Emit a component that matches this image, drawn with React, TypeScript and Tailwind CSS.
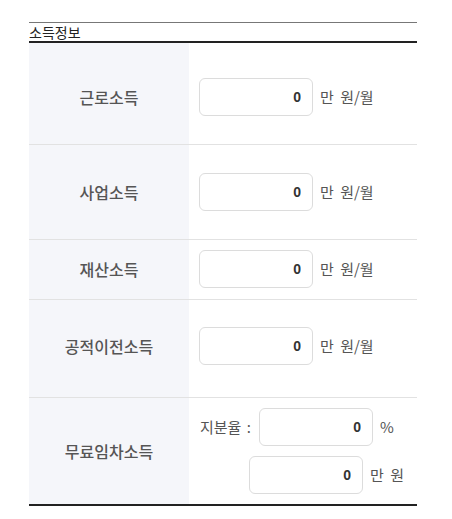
const FONT = { fontFamily: '"Noto Sans CJK KR", "Noto Sans", sans-serif' };

function NumInput({ className = "" }: { className?: string }) {
  return (
    <input
      type="text"
      defaultValue="0"
      readOnly
      className={`h-[38px] w-[114px] rounded-[6px] border border-[#dcdcdc] bg-white pr-[11px] text-right text-[14px] font-bold text-[#333] outline-none ${className}`}
      style={{ fontFamily: '"Liberation Sans", Arial, sans-serif' }}
    />
  );
}

function Unit({ children }: { children: React.ReactNode }) {
  return <span className="ml-[7px] text-[15px] text-[#555] [word-spacing:3px]">{children}</span>;
}

type Row = { label: string; pt: string; pb: string };

const ROWS: Row[] = [
  { label: "근로소득", pt: "pt-[35px]", pb: "pb-[28px]" },
  { label: "사업소득", pt: "pt-[28px]", pb: "pb-[28px]" },
  { label: "재산소득", pt: "pt-[10px]", pb: "pb-[11px]" },
  { label: "공적이전소득", pt: "pt-[27px]", pb: "pb-[32px]" },
];

export default function App() {
  return (
    <div className="min-h-[519px] bg-white pl-[29px] pt-[22px]" style={FONT}>
      <div className="w-[388px]">
        <h2 className="h-[21px] border-t border-b-2 border-t-[#777] border-b-[#222] text-[14px] leading-[18px] text-[#222]">
          소득정보
        </h2>

        {ROWS.map((r) => (
          <div key={r.label} className="grid grid-cols-[160px_1fr] border-b border-[#e2e2e2]">
            <div className={`flex items-center justify-center bg-[#f5f6fa] text-[16px] font-medium text-[#555] ${r.pt} ${r.pb}`}>
              {r.label}
            </div>
            <div className={`flex items-center pl-[10px] ${r.pt} ${r.pb}`}>
              <NumInput />
              <Unit>만 원/월</Unit>
            </div>
          </div>
        ))}

        <div className="grid grid-cols-[160px_1fr] border-b-2 border-[#222]">
          <div className="flex items-center justify-center bg-[#f5f6fa] text-[16px] font-medium text-[#555]">
            무료임차소득
          </div>
          <div className="flex flex-col gap-[10px] py-[10px] pl-[11px]">
            <div className="flex items-center">
              <span className="mr-[8px] text-[15px] text-[#555] [word-spacing:2px]">지분율 :</span>
              <NumInput />
              <Unit>%</Unit>
            </div>
            <div className="flex items-center pl-[49px]">
              <NumInput />
              <Unit>만 원</Unit>
            </div>
          </div>
        </div>
      </div>
    </div>
  );
}
